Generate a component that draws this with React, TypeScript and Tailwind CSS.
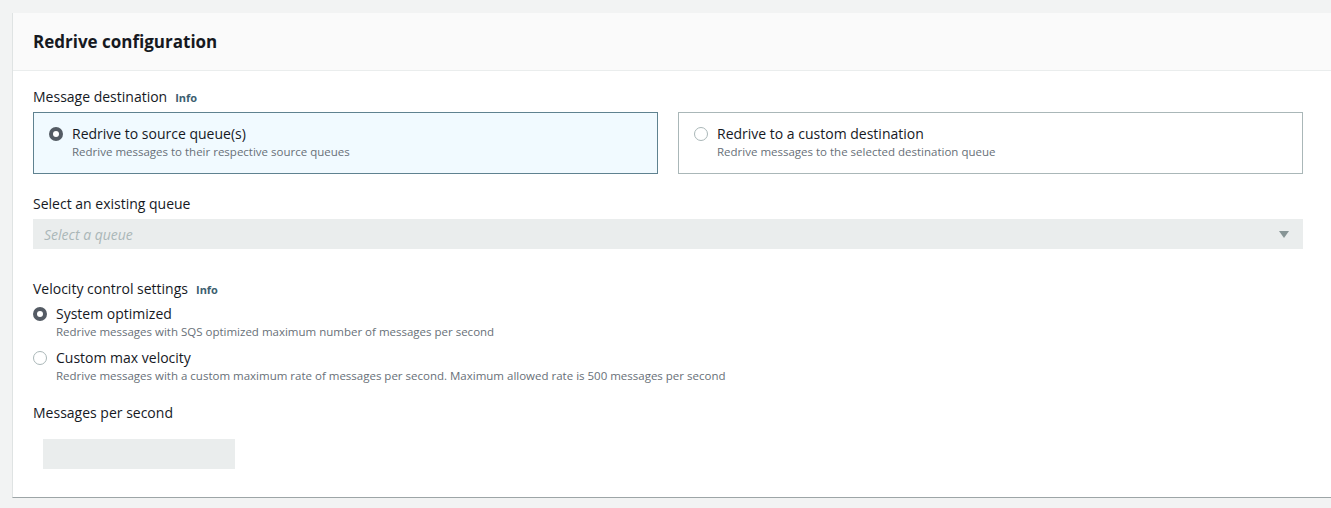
import { Fragment } from 'react'

function Radio({ checked }: { checked?: boolean }) {
  return checked ? (
    <span className="flex h-[14px] w-[14px] shrink-0 items-center justify-center rounded-full bg-[#545b64]">
      <span className="block h-[6px] w-[6px] rounded-full bg-white" />
    </span>
  ) : (
    <span className="block h-[14px] w-[14px] shrink-0 rounded-full border border-[#aab7b8] bg-white" />
  )
}

function Label({ text, info }: { text: string; info?: boolean }) {
  return (
    <div className="flex items-baseline gap-[8px] text-[14px] leading-[20px] text-[#16191f]">
      <span>{text}</span>
      {info && <span className="text-[11px] font-bold text-[#3d6070]">Info</span>}
    </div>
  )
}

export default function App() {
  const tiles = [
    { title: 'Redrive to source queue(s)', desc: 'Redrive messages to their respective source queues', checked: true },
    { title: 'Redrive to a custom destination', desc: 'Redrive messages to the selected destination queue', checked: false },
  ]
  const velocity = [
    { title: 'System optimized', desc: 'Redrive messages with SQS optimized maximum number of messages per second', checked: true },
    {
      title: 'Custom max velocity',
      desc: 'Redrive messages with a custom maximum rate of messages per second. Maximum allowed rate is 500 messages per second',
      checked: false,
    },
  ]

  return (
    <div className="min-h-[508px] bg-[#f2f3f3] pl-[12px] pt-[13px] font-['Open_Sans',sans-serif]">
      <div className="border-b border-l border-b-[#9da5a7] border-l-[#dfe3e3] bg-white">
        {/* Header */}
        <div className="flex h-[58px] items-center border-b border-[#eaeded] bg-[#fafafa] px-[20px]">
          <h2 className="text-[17px] font-bold text-[#16191f]">Redrive configuration</h2>
        </div>

        {/* Body */}
        <div className="pb-[28px] pl-[20px] pr-[28px] pt-[16px]">
          <Label text="Message destination" info />
          <div className="mt-[4px] grid grid-cols-2 gap-[20px]">
            {tiles.map((t) => (
              <div
                key={t.title}
                className={`flex h-[62px] gap-[9px] px-[15px] pt-[11px] ${
                  t.checked ? 'border border-[#5f8290] bg-[#f1faff]' : 'border border-[#aab7b8] bg-white'
                }`}
              >
                <div className="pt-[3px]">
                  <Radio checked={t.checked} />
                </div>
                <div>
                  <div className="text-[14px] leading-[20px] text-[#16191f]">{t.title}</div>
                  <div className="text-[11.5px] leading-[16px] text-[#687078]">{t.desc}</div>
                </div>
              </div>
            ))}
          </div>

          <div className="mt-[20px]">
            <Label text="Select an existing queue" />
            <div className="mt-[5px] flex h-[30px] items-center justify-between bg-[#eaeded] pl-[11px] pr-[14px]">
              <span className="text-[14px] italic text-[#aab7b8]">Select a queue</span>
              <svg width="10" height="7" viewBox="0 0 10 7">
                <path d="M0 0 L10 0 L5 7 Z" fill="#879596" />
              </svg>
            </div>
          </div>

          <div className="mt-[30px]">
            <Label text="Velocity control settings" info />
            <div className="mt-[4px] flex flex-col gap-[8px]">
              {velocity.map((v) => (
                <Fragment key={v.title}>
                  <div className="flex gap-[9px] pl-[0px]">
                    <div className="pt-[3px]">
                      <Radio checked={v.checked} />
                    </div>
                    <div>
                      <div className="text-[14px] leading-[20px] text-[#16191f]">{v.title}</div>
                      <div className="text-[11.5px] leading-[16px] text-[#687078]">{v.desc}</div>
                    </div>
                  </div>
                </Fragment>
              ))}
            </div>
          </div>

          <div className="mt-[19px]">
            <Label text="Messages per second" />
            <div className="ml-[10px] mt-[16px] h-[30px] w-[192px] bg-[#eaeded]" />
          </div>
        </div>
      </div>
    </div>
  )
}
